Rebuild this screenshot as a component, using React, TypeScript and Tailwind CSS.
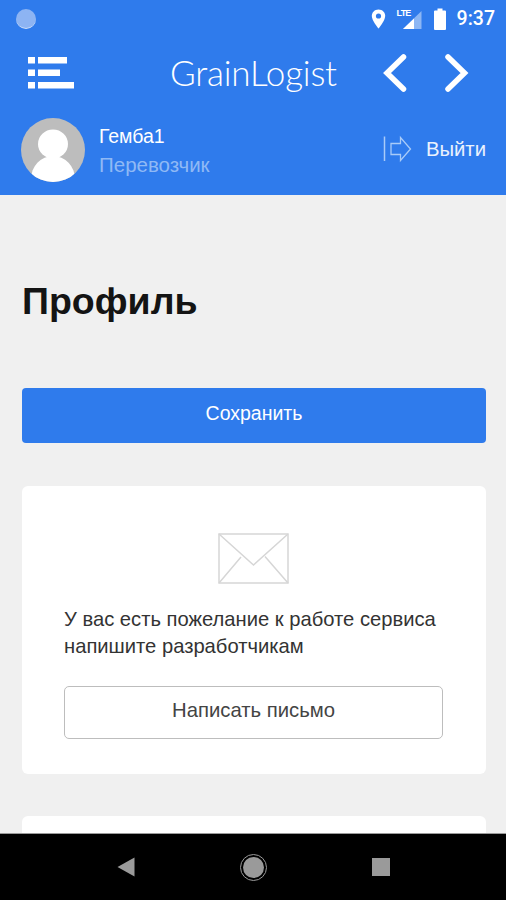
function MenuIcon() {
  return (
    <svg width="48" height="34" viewBox="0 0 48 34" fill="#fff">
      <rect x="1" y="1" width="7" height="6.5" />
      <rect x="11" y="1" width="29" height="6.5" />
      <rect x="1" y="13.5" width="7" height="6.5" />
      <rect x="11" y="13.5" width="22" height="6.5" />
      <rect x="1" y="26" width="7" height="6.5" />
      <rect x="11" y="26" width="36" height="6.5" />
    </svg>
  );
}

function Chevron({ flip }: { flip?: boolean }) {
  return (
    <svg width="24" height="38" viewBox="0 0 24 38" fill="none" stroke="#fff" strokeWidth="5.500" strokeLinecap="round" strokeLinejoin="miter">
      <path d={flip ? "M3 3L19.500 19 3 35" : "M20.500 3L4 19 20.500 35"} />
    </svg>
  );
}

function StatusIcons() {
  return (
    <div className="flex items-center">
      {/* location pin */}
      <svg width="15" height="20" viewBox="0 0 15 20" className="mr-[11px]">
        <path d="M7.500 0.500C3.600 0.500 0.800 3.400 0.800 7c0 4.600 6.700 12.500 6.700 12.500S14.200 11.600 14.200 7c0-3.600-2.800-6.500-6.700-6.500z" fill="#fff" />
        <circle cx="7.500" cy="7" r="2.600" fill="#2f7bec" />
      </svg>
      {/* signal with LTE */}
      <div className="relative mr-[12px] h-[22px] w-[25px]">
        <svg width="20" height="20" viewBox="0 0 20 20" className="absolute bottom-0 right-0">
          <path d="M19.500 1V19H1z" fill="#fff" fillOpacity="0.45" />
          <path d="M12 8.500V19H1z" fill="#fff" />
        </svg>
        <span className="absolute left-0 top-0 text-[9px] font-bold leading-[11px] tracking-[-0.8px] text-white">LTE</span>
      </div>
      {/* battery */}
      <svg width="12" height="22" viewBox="0 0 12 22" className="mr-[11px]">
        <path d="M3.500 0.500h5v2h2.500a1 1 0 0 1 1 1v17.500a1 1 0 0 1-1 1h-10a1 1 0 0 1-1-1v-17.500a1 1 0 0 1 1-1h2.500z" fill="#fff" />
      </svg>
      <span className="text-[19.500px] font-medium leading-none text-white" style={{ fontFamily: "Roboto, sans-serif" }}>
        9:37
      </span>
    </div>
  );
}

function Avatar() {
  return (
    <div className="h-[64px] w-[64px] shrink-0 overflow-hidden rounded-full bg-[#bdbdbd]">
      <svg width="64" height="64" viewBox="0 0 64 64" fill="#fff">
        <ellipse cx="32" cy="26" rx="15" ry="14.500" />
        <ellipse cx="32" cy="61" rx="22" ry="23" />
      </svg>
    </div>
  );
}

function LogoutIcon() {
  return (
    <svg width="30" height="28" viewBox="0 0 30 28" fill="none" stroke="#a9cbf8" strokeWidth="1.300">
      <path d="M1.500 1.500V26" strokeWidth="1.500" />
      <path d="M8 8.500h9.500V2.500L27.500 14 17.500 25.500V19.500H8z" />
    </svg>
  );
}

function EnvelopeIcon() {
  return (
    <svg width="71" height="51" viewBox="0 0 71 51" fill="none" stroke="#d6d6d6" strokeWidth="1.500">
      <rect x="1" y="1" width="69" height="49" />
      <path d="M1 1l34.500 31L70 1" />
      <path d="M1 50L23 24M70 50L47 23.500" />
    </svg>
  );
}

export default function App() {
  return (
    <div className="flex h-[900px] w-[506px] flex-col overflow-hidden bg-[#f0f0f0]" style={{ fontFamily: "'Liberation Sans', Arial, sans-serif" }}>
      {/* header */}
      <header className="h-[195px] shrink-0 bg-[#2f7bec]">
        <div className="flex h-[36px] items-center justify-between pl-[16px] pr-[11px] pt-[1px]">
          <div className="h-[20px] w-[20px] rounded-full border-b border-white/60 bg-[#8db4f3]" />
          <StatusIcons />
        </div>
        <div className="flex h-[73px] items-center pl-[27px]">
          <MenuIcon />
          <span className="ml-[95px] w-[213px] text-[35px] font-light leading-none tracking-[-0.2px] text-white" style={{ fontFamily: "Lato, sans-serif" }}>
            GrainLogist
          </span>
          <Chevron />
          <div className="ml-[38px]">
            <Chevron flip />
          </div>
        </div>
        <div className="flex items-center pl-[21px] pr-[20px] pt-[9px]">
          <Avatar />
          <div className="ml-[14px] flex flex-col">
            <span className="text-[19.500px] leading-[24px] text-white">Гемба1</span>
            <span className="mt-[5px] text-[20.500px] leading-[24px] text-[#8fb9f5]">Перевозчик</span>
          </div>
          <div className="ml-auto flex items-center gap-[13px] pb-[2px]">
            <LogoutIcon />
            <span className="text-[20.300px] leading-none text-white/90">Выйти</span>
          </div>
        </div>
      </header>

      {/* content */}
      <main className="flex min-h-0 flex-1 flex-col overflow-hidden pl-[22px] pr-[20px]">
        <h1 className="mt-[85px] text-[37.500px] font-bold leading-[42px] text-[#141414]">Профиль</h1>
        <button className="mt-[66px] h-[55px] w-full shrink-0 rounded-[4px] bg-[#2f7bec] pb-[3px] text-[19.500px] text-white">Сохранить</button>
        <section className="mt-[43px] flex h-[288px] shrink-0 flex-col rounded-[6px] bg-white pl-[42px] pr-[43px] pt-[47px]">
          <div className="flex justify-center">
            <EnvelopeIcon />
          </div>
          <p className="mt-[22px] whitespace-nowrap text-[20.200px] leading-[27px] text-[#333]">
            У вас есть пожелание к работе сервиса
            <br />
            напишите разработчикам
          </p>
          <button className="mt-[26px] h-[53px] w-full rounded-[5px] border border-[#bdbdbd] pb-[4px] text-[20.300px] text-[#444]">Написать письмо</button>
        </section>
        <section className="mt-[42px] h-[60px] shrink-0 rounded-t-[6px] bg-white" />
      </main>

      {/* android nav bar */}
      <nav className="flex h-[67px] shrink-0 items-center justify-center border-t border-[#9a9a9a] bg-black">
        <svg width="18" height="20" viewBox="0 0 18 20" className="mb-[1px]">
          <path d="M17.500 0.500V19.500L0.500 10z" fill="#9a9a9a" />
        </svg>
        <div className="ml-[105px] mr-[105px] flex h-[27px] w-[27px] items-center justify-center rounded-full border border-[#9a9a9a]">
          <div className="h-[21px] w-[21px] rounded-full bg-[#9a9a9a]" />
        </div>
        <div className="h-[18px] w-[18px] bg-[#9a9a9a]" />
      </nav>
    </div>
  );
}
